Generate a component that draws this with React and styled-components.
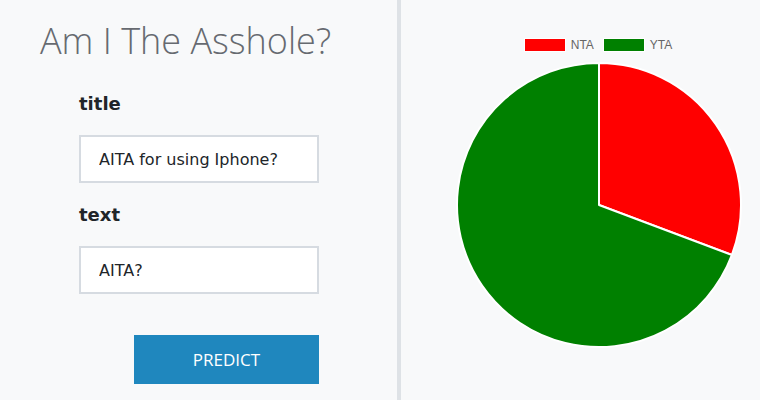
import styled, { createGlobalStyle } from "styled-components";

const GlobalStyle = createGlobalStyle`
  html, body {
    margin: 0;
    padding: 0;
    background: #f8f9fa;
  }
  * {
    box-sizing: border-box;
  }
`;

const slices = [
  { label: "NTA", value: 0.3072, color: "#ff0000" },
  { label: "YTA", value: 0.6928, color: "#008000" },
];

const fields = [
  { name: "title", value: "AITA for using Iphone?" },
  { name: "text", value: "AITA?" },
];

const R = 142;
const C = 144;

const slicePath = (start, end) => {
  const a0 = start * Math.PI * 2;
  const a1 = end * Math.PI * 2;
  const x0 = C + R * Math.sin(a0);
  const y0 = C - R * Math.cos(a0);
  const x1 = C + R * Math.sin(a1);
  const y1 = C - R * Math.cos(a1);
  const large = end - start > 0.5 ? 1 : 0;
  return `M ${C} ${C} L ${x0} ${y0} A ${R} ${R} 0 ${large} 1 ${x1} ${y1} Z`;
};

const PieChart = () => {
  let acc = 0;
  return (
    <svg width={C * 2} height={C * 2} viewBox={`0 0 ${C * 2} ${C * 2}`}>
      {slices.map((s) => {
        const d = slicePath(acc, acc + s.value);
        acc += s.value;
        return (
          <path
            key={s.label}
            d={d}
            fill={s.color}
            stroke="#fff"
            strokeWidth="2"
            strokeLinejoin="round"
          />
        );
      })}
    </svg>
  );
};

export default function App() {
  return (
    <>
      <GlobalStyle />
      <Page>
        <FormPanel>
          <Heading>Am I The Asshole?</Heading>
          <Form>
            {fields.map(({ name, value }) => (
              <Field key={name}>
                <Label>{name}</Label>
                <Input defaultValue={value} />
              </Field>
            ))}
            <ButtonRow>
              <PredictButton>PREDICT</PredictButton>
            </ButtonRow>
          </Form>
        </FormPanel>

        <ChartPanel>
          <Legend>
            {slices.map((s) => (
              <LegendItem key={s.label}>
                <Swatch $color={s.color} />
                {s.label}
              </LegendItem>
            ))}
          </Legend>
          <PieChart />
        </ChartPanel>
      </Page>
    </>
  );
}

const Page = styled.div`
  display: flex;
  width: 760px;
  height: 400px;
  background: #f8f9fa;
`;

const FormPanel = styled.div`
  width: 401px;
  flex-shrink: 0;
  padding: 20px 0 0 40px;
  border-right: 4px solid #dee2e6;
`;

const Heading = styled.h1`
  margin: 0;
  font-family: "Open Sans", sans-serif;
  font-weight: 300;
  font-size: 36px;
  line-height: 42px;
  color: #666a70;
`;

const Form = styled.div`
  display: flex;
  flex-direction: column;
  width: 279px;
  margin-top: 31px;
  padding-left: 39px;
`;

const Field = styled.div`
  display: flex;
  flex-direction: column;
  gap: 20px;
  margin-bottom: 21px;
`;

const Label = styled.label`
  font-family: "DejaVu Sans", sans-serif;
  font-weight: bold;
  font-size: 18px;
  line-height: 22px;
  color: #212529;
`;

const Input = styled.input`
  width: 240px;
  height: 48px;
  padding: 0 18px;
  border: 2px solid #d6dbe1;
  border-radius: 0;
  background: #fff;
  font-family: "DejaVu Sans", sans-serif;
  font-size: 16px;
  color: #212529;
  outline: none;
`;

const ButtonRow = styled.div`
  display: flex;
  justify-content: flex-end;
  padding-top: 20px;
`;

const PredictButton = styled.button`
  width: 185px;
  height: 49px;
  border: none;
  border-radius: 0;
  background: #1f87be;
  color: #fff;
  font-family: "Open Sans", sans-serif;
  font-size: 17px;
  font-weight: 400;
  cursor: pointer;
`;

const ChartPanel = styled.div`
  flex: 1;
  display: flex;
  flex-direction: column;
  align-items: center;
  padding: 37px 0 0 36px;
  gap: 8px;
`;

const Legend = styled.div`
  display: flex;
  gap: 10px;
  height: 16px;
  align-items: center;
  font-family: "Liberation Sans", Arial, sans-serif;
  font-size: 12px;
  color: #666;
`;

const LegendItem = styled.div`
  display: flex;
  align-items: center;
  gap: 6px;
`;

const Swatch = styled.span`
  width: 40px;
  height: 12px;
  background: ${(p) => p.$color};
  border: 1px solid #fff;
  box-sizing: content-box;
  margin: -1px;
`;
